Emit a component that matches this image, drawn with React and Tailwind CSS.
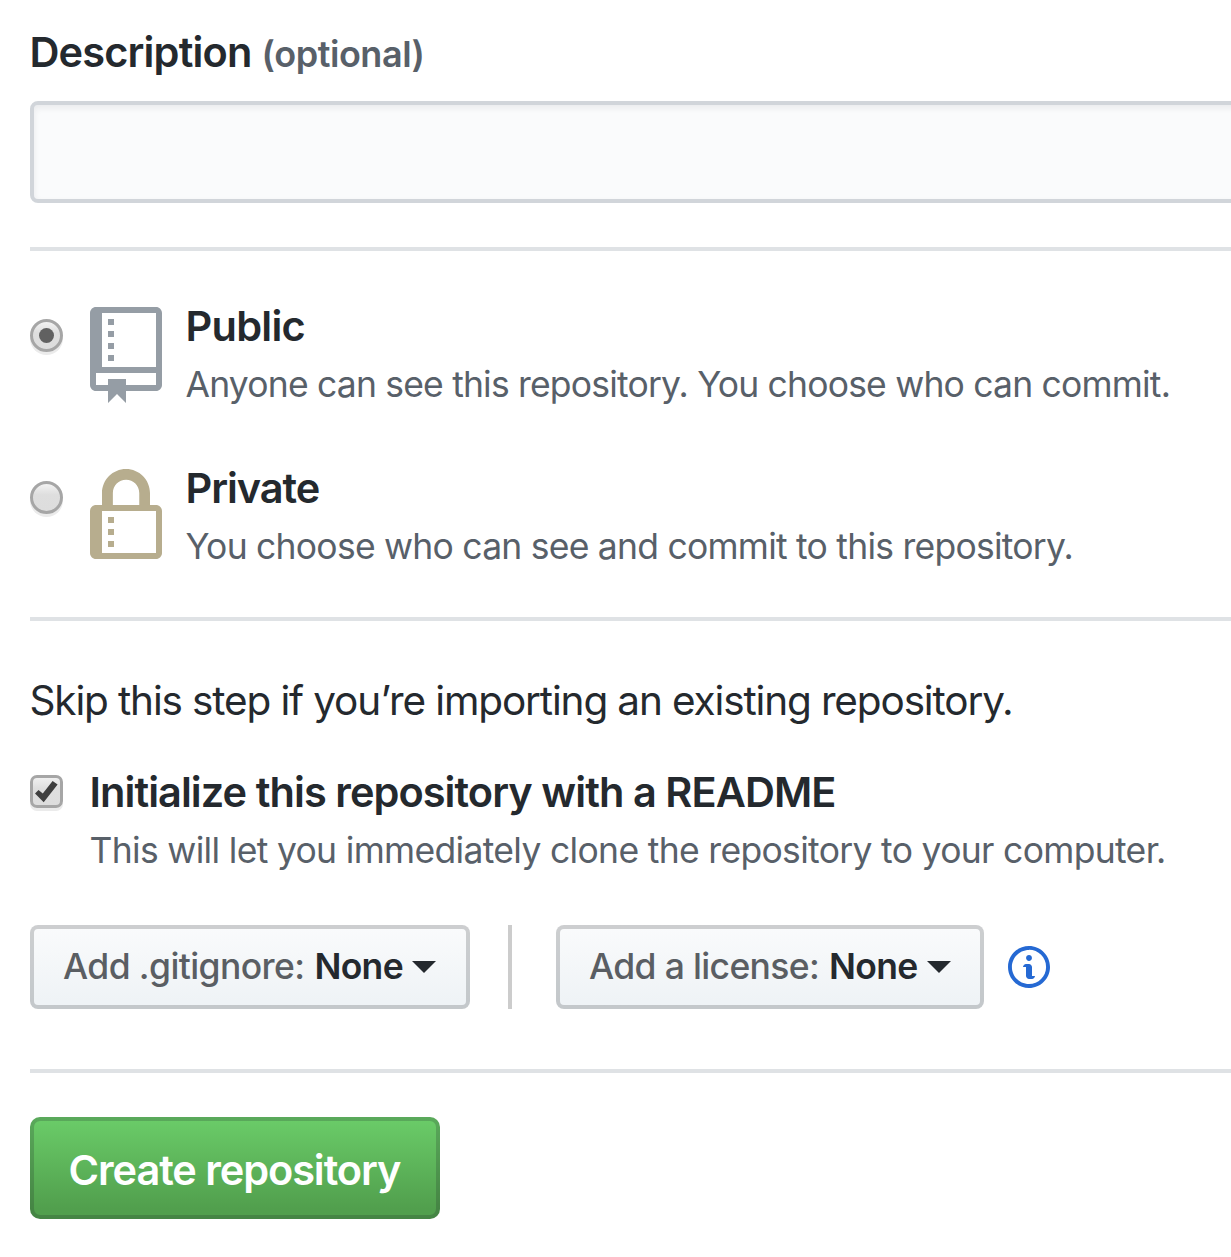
import React from "react";

function Radio({ checked }) {
  return (
    <span className="mt-[18px] flex size-[33px] shrink-0 items-center justify-center rounded-full border-[3px] border-[#a6a6a6] bg-linear-to-b from-[#f0f0f0] from-5% via-[#dedede] via-40% to-[#dddddd] shadow-[0_3px_0_#ebebeb]">
      {checked && <span className="size-[15px] rounded-full bg-[#616161]" />}
    </span>
  );
}

function Divider({ className }) {
  return <hr className={`h-1 border-0 bg-[#dfe2e5] ${className}`} />;
}

function Caret() {
  return <span className="h-0 w-0 border-x-[12px] border-t-[12px] border-x-transparent border-t-[#24292e]" />;
}

function RepoIcon() {
  return (
    <svg viewBox="0 0 12 16" className="mt-1.5 ml-[27px] h-24 w-[72px] shrink-0 fill-[#959da5]">
      <path
        fillRule="evenodd"
        d="M4 9H3V8h1v1zm0-3H3v1h1V6zm0-2H3v1h1V4zm0-2H3v1h1V2zm8-1v12c0 .55-.45 1-1 1H6v2l-1.5-1.5L3 16v-2H1c-.55 0-1-.45-1-1V1c0-.55.45-1 1-1h10c.55 0 1 .45 1 1zm-1 10H1v2h2v-1h3v1h5v-2zm0-10H2v9h9V1z"
      />
    </svg>
  );
}

function LockIcon() {
  return (
    <svg viewBox="0 0 12 16" className="mt-1.5 ml-[27px] h-24 w-[72px] shrink-0 fill-[#b7ad8e]">
      <path
        fillRule="evenodd"
        d="M4 13H3v-1h1v1zm8-6v7c0 .55-.45 1-1 1H1c-.55 0-1-.45-1-1V7c0-.55.45-1 1-1h1V4c0-2.2 1.8-4 4-4s4 1.8 4 4v2h1c.55 0 1 .45 1 1zM3.8 6h4.41V4c0-1.22-.98-2.2-2.2-2.2-1.22 0-2.2.98-2.2 2.2v2H3.8zM11 7H2v7h9V7zM4 8H3v1h1V8zm0 2H3v1h1v-1z"
      />
    </svg>
  );
}

function InfoIcon() {
  return (
    <svg viewBox="0 0 14 16" className="ml-6 h-12 w-[42px] shrink-0 fill-[#2569d3]">
      <path
        fillRule="evenodd"
        d="M6.3 5.69a.942.942 0 0 1-.28-.7c0-.28.09-.52.28-.7.19-.18.42-.28.7-.28.28 0 .52.09.7.28.18.19.28.42.28.7 0 .28-.09.52-.28.7a1 1 0 0 1-.7.3c-.28 0-.52-.11-.7-.3zM8 7.99c-.02-.25-.11-.48-.31-.69-.2-.19-.42-.3-.69-.31H6c-.27.02-.48.13-.69.31-.2.2-.3.44-.31.69h1v3c.02.27.11.5.31.69.2.2.42.31.69.31h1c.27 0 .48-.11.69-.31.2-.19.3-.42.31-.69H8V7.98v.01zM7 2.3c-3.14 0-5.7 2.54-5.7 5.68 0 3.14 2.56 5.7 5.7 5.7s5.7-2.55 5.7-5.7c0-3.15-2.56-5.69-5.7-5.69v.01zM7 .98c3.86 0 7 3.14 7 7s-3.14 7-7 7-7-3.12-7-7 3.14-7 7-7z"
      />
    </svg>
  );
}

function Option({ checked, icon, title, titleClass, note, noteClass, className }) {
  return (
    <label className={`flex items-start ${className}`}>
      <Radio checked={checked} />
      {icon}
      <span className="ml-[23.5px] block">
        <span className={`block text-[41.5px]/[50px] font-semibold ${titleClass}`}>{title}</span>
        <span className={`mt-3 block text-[35.5px]/[44px] text-[#586069] ${noteClass}`}>{note}</span>
      </span>
    </label>
  );
}

function SelectButton({ label, labelClass, className }) {
  return (
    <button
      className={`flex h-[84px] items-center rounded-lg border-4 border-[#1b1f23]/20 bg-linear-to-b from-[#fafbfc] to-[#eff3f6] to-90% bg-origin-border pl-[29px] text-[35.5px]/[44px] ${className}`}
    >
      <span className={`font-medium text-[#5a5e63] ${labelClass}`}>{label}</span>
      <span className="mr-[9px] ml-2.5 font-semibold tracking-[-0.7px]">None</span>
      <Caret />
    </button>
  );
}

export default function App() {
  return (
    <main className="h-[1257px] w-[1231px] overflow-hidden bg-white pt-[27px] pl-[30px] font-[Inter,sans-serif] whitespace-nowrap text-[#24292e]">
      <div className="flex h-[50px] items-baseline text-[41.5px]/[50px] font-semibold tracking-[-0.85px]">
        <span className="-ml-[0.5px]">Description</span>
        <span className="ml-[10px] text-[36px]/[40px] tracking-[-0.45px] text-[#586069]">(optional)</span>
      </div>
      <input
        aria-label="Description"
        className="mt-6 block h-[102px] w-[1240px] rounded-lg border-4 border-[#d1d5da] bg-[#fafbfc] shadow-[inset_0_3px_6px_rgba(27,31,35,0.075)]"
      />
      <Divider className="mt-11" />

      <Option
        checked
        icon={<RepoIcon />}
        title="Public"
        titleClass="tracking-[-0.76px]"
        note="Anyone can see this repository. You choose who can commit."
        noteClass="tracking-[-0.81px]"
        className="mt-[50px]"
      />
      <Option
        icon={<LockIcon />}
        title="Private"
        titleClass="tracking-[-1.05px]"
        note="You choose who can see and commit to this repository."
        noteClass="tracking-[-0.76px]"
        className="mt-14"
      />
      <Divider className="mt-12" />

      <p className="mt-[55px] -ml-[0.5px] text-[40.5px]/[50px] tracking-[-1.14px]">
        Skip this step if you’re importing an existing repository.
      </p>
      <label className="mt-[41px] flex items-start">
        <span className="mt-2 flex size-[33px] shrink-0 items-center justify-center rounded-[7px] border-[3px] border-[#a6a6a6] bg-linear-to-b from-[#f0f0f0] via-[#dedede] via-40% to-[#dddddd] shadow-[0_3px_0_#ebebeb]">
          <svg viewBox="0 0 27 27" className="size-[27px] shrink-0">
            <path d="M2 15.6 5.5 12l4.3 3.4L19.6 2.9l5 3.6L10.7 24.3z" fill="#3f3f3f" />
          </svg>
        </span>
        <span className="ml-[26.5px] block">
          <span className="block text-[41.5px]/[50px] font-semibold tracking-[-0.94px]">
            Initialize this repository with a README
          </span>
          <span className="mt-3 block text-[35.5px]/[44px] tracking-[-0.68px] text-[#586069]">
            This will let you immediately clone the repository to your computer.
          </span>
        </span>
      </label>

      <div className="mt-[52px] flex items-center">
        <SelectButton label="Add .gitignore:" labelClass="tracking-[-0.6px]" className="w-[440px]" />
        <span className="mr-11 ml-[38px] h-[84px] w-1 bg-[#cccccc]" />
        <SelectButton label="Add a license:" labelClass="tracking-[-0.65px]" className="w-[428px]" />
        <InfoIcon />
      </div>
      <Divider className="mt-[60px]" />

      <button className="mt-11 flex h-[102px] w-[410px] items-center justify-center rounded-[10px] border-4 border-[#1b1f23]/20 bg-linear-to-b from-[#6bcd69] to-[#519f4d] to-90% bg-origin-border pt-1 pr-px text-[41.5px]/[50px] font-semibold tracking-[-1.08px] text-white">
        Create repository
      </button>
    </main>
  );
}
